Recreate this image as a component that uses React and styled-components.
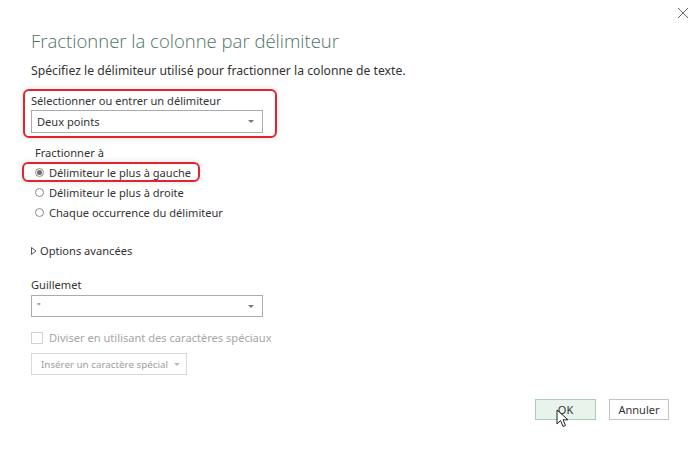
import styled, { createGlobalStyle } from "styled-components";

const GlobalStyle = createGlobalStyle`
  html, body {
    margin: 0;
    padding: 0;
    background: #ffffff;
  }
  body {
    font-family: "Noto Sans", "Open Sans", sans-serif;
    color: #333333;
  }
`;

const Dialog = styled.div`
  position: relative;
  width: 700px;
  height: 449px;
  box-sizing: border-box;
  background: #ffffff;
  display: flex;
  flex-direction: column;
  overflow: hidden;
`;

const TopBar = styled.div`
  height: 26px;
  display: flex;
  justify-content: flex-end;
  align-items: center;
  padding-right: 9px;
`;

const CloseButton = styled.button`
  width: 16px;
  height: 16px;
  border: none;
  background: none;
  padding: 0;
  display: flex;
  align-items: center;
  justify-content: center;
`;

const Body = styled.div`
  padding-left: 31px;
  display: flex;
  flex-direction: column;
  align-items: flex-start;
`;

const Title = styled.h1`
  margin: 2px 0 0;
  font-family: "Open Sans", "Noto Sans", sans-serif;
  font-weight: 300;
  font-size: 18.5px;
  line-height: 26px;
  color: #4f7363;
`;

const Subtitle = styled.p`
  margin: 8px 0 0;
  font-size: 12.2px;
  line-height: 18px;
  color: #333;
`;

const Highlight = styled.div`
  border: 2px solid #e3232f;
  border-radius: 6px;
  box-shadow: 0 0 6px rgba(0, 0, 0, 0.12);
  display: flex;
  flex-direction: column;
  align-items: flex-start;
  margin-left: ${(p) => p.$shift}px;
  padding: ${(p) => p.$pad};
`;

const Label = styled.div`
  font-size: 11.1px;
  line-height: 16px;
  color: #333;
  margin-top: ${(p) => p.$top || 0}px;
  margin-left: ${(p) => p.$left || 0}px;
`;

const Select = styled.div`
  width: 232px;
  height: ${(p) => p.$h}px;
  box-sizing: border-box;
  border: 1px solid #ababab;
  background: #fff;
  display: flex;
  align-items: center;
  justify-content: space-between;
  padding: 0 8px 0 5px;
  font-size: 11.1px;
  color: #333;
  margin-top: ${(p) => p.$top || 0}px;
`;

const Caret = styled.span`
  width: 0;
  height: 0;
  border-left: 3px solid transparent;
  border-right: 3px solid transparent;
  border-top: 3px solid ${(p) => p.$color || "#777"};
`;

const RadioGroup = styled.div`
  margin-left: 4px;
  display: flex;
  flex-direction: column;
  align-items: flex-start;
  margin-top: 1px;
`;

const RadioRow = styled.label`
  display: flex;
  align-items: center;
  gap: 5px;
  height: ${(p) => p.$h || 20}px;
  font-size: 11.1px;
  color: #333;
`;

const Radio = styled.span`
  width: 9px;
  height: 9px;
  border-radius: 50%;
  border: 1px solid #8a8a8a;
  background: #fff;
  box-sizing: border-box;
  display: flex;
  align-items: center;
  justify-content: center;
  &::after {
    content: "";
    width: 5px;
    height: 5px;
    border-radius: 50%;
    background: ${(p) => (p.$checked ? "#6d6d6d" : "transparent")};
  }
`;

const Expander = styled.div`
  display: flex;
  align-items: center;
  gap: 3px;
  margin-top: 21px;
  font-size: 11.1px;
  line-height: 16px;
  color: #333;
`;

const CheckRow = styled.div`
  display: flex;
  align-items: center;
  gap: 6px;
  margin-top: 13px;
  font-size: 11.1px;
  line-height: 16px;
  color: #a6a6a6;
`;

const Checkbox = styled.span`
  width: 12px;
  height: 12px;
  box-sizing: border-box;
  border: 1px solid #d2d2d2;
  background: #fff;
`;

const Quote = styled.span`
  font-size: 9px;
  color: #555;
`;

const DropButton = styled.div`
  margin-top: 7px;
  height: 22px;
  box-sizing: border-box;
  border: 1px solid #d9d9d9;
  display: flex;
  align-items: center;
  gap: 6px;
  padding: 0 6px 0 9px;
  font-size: 9.8px;
  color: #9e9e9e;
`;

const Footer = styled.div`
  display: flex;
  justify-content: flex-end;
  gap: 13px;
  padding-right: 31px;
  margin-top: 24px;
`;

const Button = styled.button`
  position: relative;
  height: 21px;
  width: ${(p) => p.$w}px;
  box-sizing: border-box;
  font-family: "Noto Sans", sans-serif;
  font-size: 11px;
  color: #333;
  background: ${(p) => (p.$primary ? "#e7f3eb" : "#ffffff")};
  border: 1px solid ${(p) => (p.$primary ? "#a9ccb7" : "#c4c4c4")};
  padding: 0;
  line-height: 19px;
`;

const Cursor = styled.svg`
  position: absolute;
  left: 20px;
  top: 9px;
`;

export default function App() {
  return (
    <>
      <GlobalStyle />
      <Dialog>
        <TopBar>
          <CloseButton aria-label="Fermer">
            <svg width="12" height="12" viewBox="0 0 12 12">
              <path d="M1 1 L11 11 M11 1 L1 11" stroke="#6a6a6a" strokeWidth="1" />
            </svg>
          </CloseButton>
        </TopBar>
        <Body>
          <Title>Fractionner la colonne par délimiteur</Title>
          <Subtitle>Spécifiez le délimiteur utilisé pour fractionner la colonne de texte.</Subtitle>

          <Highlight $shift={-8} $pad="2px 12px 3px 6px" style={{ marginTop: 9 }}>
            <Label>Sélectionner ou entrer un délimiteur</Label>
            <Select $h={23} $top={1}>
              <span>Deux points</span>
              <Caret />
            </Select>
          </Highlight>

          <Label $top={7} $left={4}>Fractionner à</Label>
          <RadioGroup>
            <Highlight $shift={-13} $pad="0 7px 0 11px">
              <RadioRow $h={16}>
                <Radio $checked />
                Délimiteur le plus à gauche
              </RadioRow>
            </Highlight>
            <RadioRow>
              <Radio />
              Délimiteur le plus à droite
            </RadioRow>
            <RadioRow>
              <Radio />
              Chaque occurrence du délimiteur
            </RadioRow>
          </RadioGroup>

          <Expander>
            <svg width="6" height="8" viewBox="0 0 6 8">
              <path d="M0.5 0.5 L5 4 L0.5 7.5 Z" fill="none" stroke="#555" strokeWidth="1" />
            </svg>
            Options avancées
          </Expander>

          <Label $top={18}>Guillemet</Label>
          <Select $h={22} $top={2}>
            <Quote>"</Quote>
            <Caret />
          </Select>

          <CheckRow>
            <Checkbox />
            Diviser en utilisant des caractères spéciaux
          </CheckRow>

          <DropButton>
            Insérer un caractère spécial
            <Caret $color="#bbb" />
          </DropButton>
        </Body>
        <Footer>
          <Button $primary $w={61}>
            OK
            <Cursor width="14" height="20" viewBox="0 0 14 20">
              <path
                d="M1 1 L1 15 L4.5 11.5 L7 17.5 L9.5 16.5 L7 10.8 L12 10.8 Z"
                fill="#ffffff"
                stroke="#222"
                strokeWidth="1"
                strokeLinejoin="round"
              />
            </Cursor>
          </Button>
          <Button $w={60}>Annuler</Button>
        </Footer>
      </Dialog>
    </>
  );
}
